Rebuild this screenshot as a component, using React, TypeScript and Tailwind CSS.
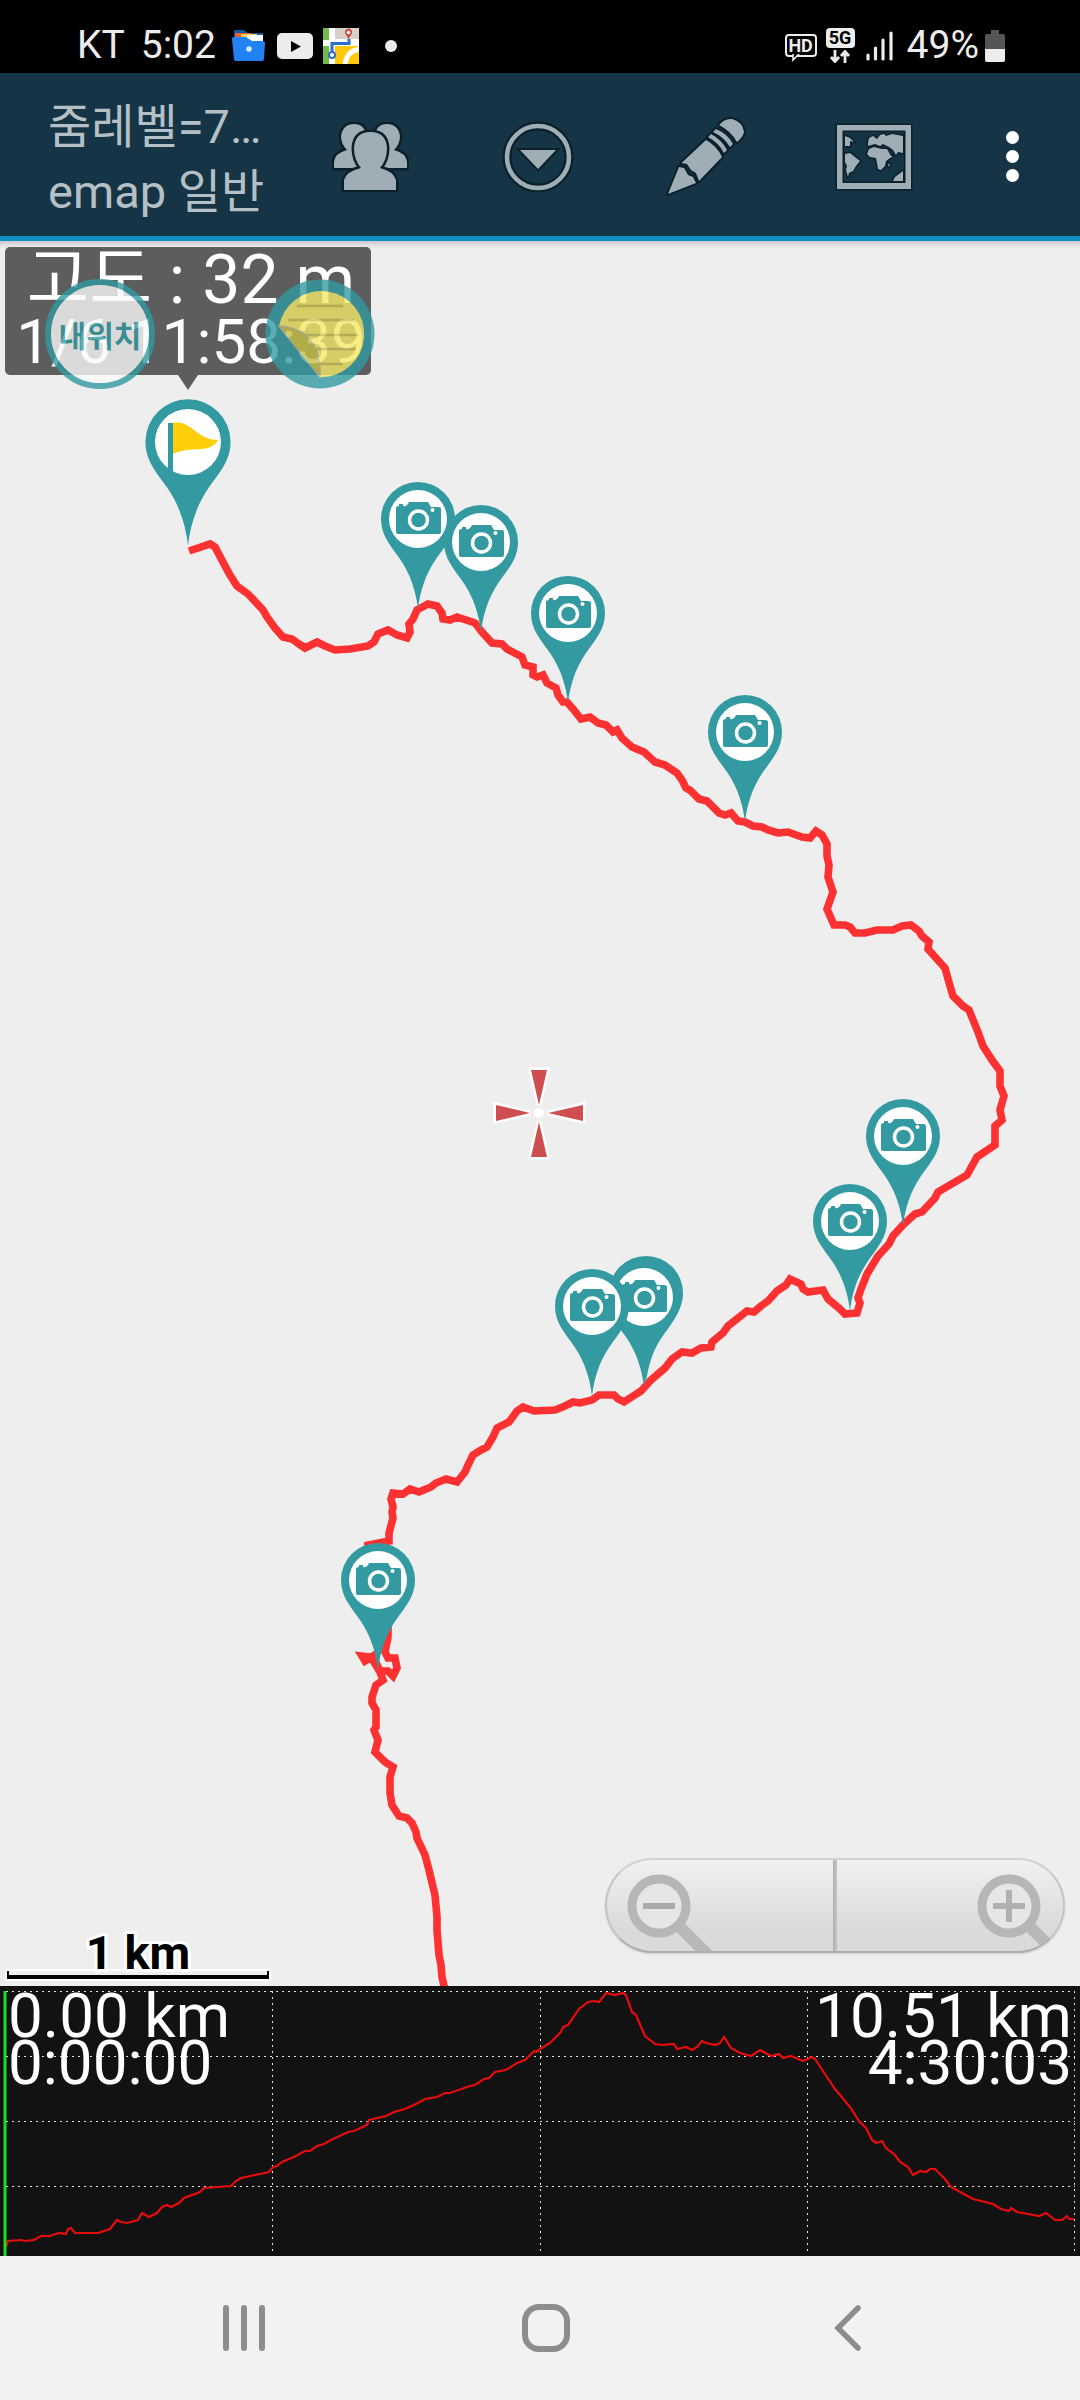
import type { ReactNode } from "react";

type Point = { x: number; y: number };

const TEAL = "#339aa2";

// tip of every photo pin, in map coordinates
const PHOTOS: Point[] = [
  { x: 418, y: 366 },
  { x: 481, y: 389 },
  { x: 568, y: 460 },
  { x: 745, y: 579 },
  { x: 903, y: 983 },
  { x: 850, y: 1068 },
  { x: 646, y: 1140 },
  { x: 644, y: 1144 },
  { x: 592, y: 1153 },
  { x: 378, y: 1427 },
];

const TRACK =
  "189,551 210,544 215,547 224,564 230,575 237,586 248,594 263,610 267,617 275,628 283,637 292,639 299,644 305,648 317,642 325,646 335,650 350,649 368,646 374,642 378,634 388,630 397,635 407,638 410,632 409,624 413,619 417,610 428,604 437,606 442,613 443,619 450,620 457,617 475,623 482,632 492,643 502,644 507,649 522,657 525,665 533,667 533,675 537,677 543,675 547,683 556,688 558,695 563,702 567,702 573,709 581,719 590,717 598,723 606,725 613,732 617,730 622,738 632,747 644,752 655,762 665,765 677,773 682,780 686,788 690,790 699,799 707,801 719,813 725,815 731,813 738,821 745,822 753,826 762,827 768,830 778,833 788,832 802,837 810,838 816,831 822,835 827,844 827,856 829,865 828,877 833,892 827,909 834,925 845,925 850,927 855,933 865,933 877,930 893,930 902,926 911,925 919,931 922,936 929,942 928,949 945,968 950,986 953,996 963,1006 969,1010 978,1032 983,1046 992,1060 1000,1071 1000,1086 1004,1096 1000,1110 1002,1120 995,1126 995,1145 977,1157 967,1175 955,1182 938,1192 935,1198 922,1212 915,1214 903,1225 893,1236 889,1244 878,1256 867,1274 861,1289 858,1298 860,1303 857,1313 845,1314 840,1309 828,1299 823,1290 808,1292 803,1289 801,1284 790,1279 786,1285 777,1291 768,1301 761,1306 754,1312 747,1311 728,1326 723,1333 712,1342 711,1347 701,1348 692,1353 682,1352 672,1359 665,1368 651,1380 641,1391 624,1402 618,1399 614,1395 599,1395 592,1400 580,1403 573,1402 565,1406 555,1410 534,1411 523,1407 517,1411 509,1422 497,1428 493,1437 487,1447 481,1450 473,1455 468,1465 465,1472 457,1482 446,1479 436,1483 431,1487 419,1492 410,1489 403,1494 393,1493 391,1499 393,1507 392,1512 393,1518 389,1533 389,1541 368,1545 370,1580 388,1620 388,1637 385,1652 388,1658 395,1658 397,1668 393,1676 388,1671 380,1671 373,1656 365,1661 362,1656 371,1657 380,1672 383,1680 376,1685 372,1697 372,1703 376,1710 376,1727 374,1730 378,1740 375,1752 385,1762 393,1767 390,1777 390,1793 392,1805 399,1816 407,1818 412,1823 416,1832 417,1838 425,1855 429,1870 435,1895 437,1917 437,1930 439,1955 441,1965 442,1977 445,1990";

const ELEVATION =
  "6,261 8,255 21,254 25,255 34,254 41,250 50,250 59,247 66,248 68,243 71,242 75,247 98,247 110,243 117,234 121,236 127,237 138,234 142,227 149,231 157,227 162,221 167,219 171,221 179,217 184,212 200,206 204,202 231,200 236,195 241,192 255,189 269,186 273,181 277,180 282,176 294,171 305,165 310,165 317,160 324,158 331,154 348,146 354,145 367,139 369,134 386,130 394,126 405,123 418,117 425,113 437,111 445,107 450,107 470,100 475,99 484,93 489,92 495,86 506,84 517,77 525,74 534,65 536,66 540,63 550,57 561,46 563,41 568,39 579,23 588,16 595,15 599,16 606,7 615,9 623,7 626,9 632,26 636,29 645,50 655,58 662,59 674,58 677,63 686,61 692,64 697,61 702,55 706,57 716,59 720,57 724,51 731,62 740,67 751,70 760,64 771,70 779,68 783,72 791,70 803,75 812,71 815,73 827,91 835,103 850,121 859,135 866,142 872,154 876,157 882,155 886,162 895,169 900,176 908,181 913,189 920,185 926,186 930,183 935,183 945,193 951,201 962,207 973,213 993,218 1001,223 1009,225 1011,222 1017,226 1028,228 1039,230 1046,227 1055,234 1062,234 1067,230 1069,233 1074,233";

const PIN = "M0 2C-2-15-7-32-18-48C-27-61-37-71-37-88A37 37 0 0 1 37-88C37-71 27-61 18-48C7-32 2-15 0 2Z";

function PhotoPin({ x, y }: Point) {
  return (
    <g transform={`translate(${x} ${y})`}>
      <path d={PIN} fill={TEAL} />
      <circle cy={-88} r={29} fill="#fff" />
      <g transform="translate(0 -88)">
        <path
          d="M-22-11Q-22-13-19-13V-15H-15V-13Q-11-12-9-17H10L13-12H20Q23-12 23-10V13Q23 15 21 15H-20Q-22 15-22 13Z"
          fill={TEAL}
        />
        <circle cx={0.5} cy={1} r={9} fill={TEAL} stroke="#fff" strokeWidth={3.5} />
        <circle cx={14.5} cy={-9} r={2} fill="#fff" />
      </g>
    </g>
  );
}

function FlagPin({ x, y }: Point) {
  return (
    <g transform={`translate(${x} ${y})`}>
      <path d={PIN} fill={TEAL} transform="scale(1.15)" />
      <circle cy={-101} r={33} fill="#fff" />
      <path d="M-20-120H-15V-69L-20-74Z" fill={TEAL} />
      <path d="M-15-120C2-124 9-103 30-103C22-88 2-98-15-89Z" fill="#ffce0a" />
    </g>
  );
}

function StatusBar() {
  return (
    <header className="flex h-[73px] items-center bg-black pr-[75px] pl-[77px] pt-[18px] text-[39px] leading-none text-[#ececec]">
      <span>KT</span>
      <span className="ml-4">5:02</span>
      <svg className="ml-4 h-8 w-[33px]" viewBox="0 0 33 32">
        <path d="M2 0H12L16 3H31V14H2Z" fill="#12579c" />
        <path d="M3 3H19L23 6V12H3Z" fill="#e8603c" />
        <path d="M9 4H25V12H9Z" fill="#fbc94e" />
        <path d="M15 5H31V12H15Z" fill="#fff" />
        <path d="M0 9Q0 7 2 7H14L20 11H31Q33 11 33 13L32 29Q32 31 30 31H4Q2 31 2 29Z" fill="#2282f3" />
        <circle cx="17" cy="19" r="2.8" fill="#d8e8ff" />
      </svg>
      <svg className="ml-3 h-[26px] w-9" viewBox="0 0 36 26">
        <rect width="36" height="26" rx="5" fill="#ececec" />
        <path d="M14 8L24 13.500L14 19Z" fill="#000" />
      </svg>
      <svg className="ml-[10px] h-9 w-9" viewBox="0 0 36 36">
        <rect width="36" height="36" fill="#fff" />
        <path d="M0 0H6V12H0ZM0 18H6V36H0Z" fill="#73b84a" />
        <path d="M12 0H36V11H12Z" fill="#d6d0c9" />
        <path d="M12 18H36V36H12Z" fill="#ffc80b" />
        <path d="M22 38Q23 22 38 21" fill="none" stroke="#fff" strokeWidth="5" />
        <path d="M9 26V15.500H26V11" fill="none" stroke="#2a6fd0" strokeWidth="3" />
        <circle cx="9" cy="27" r="3" fill="#fff" stroke="#2a6fd0" strokeWidth="2" />
        <path d="M25.500 11L22.500 6A3.500 3.500 0 1 1 28.500 6Z" fill="#d0493f" />
        <circle cx="25.500" cy="4.500" r="1.800" fill="#fff" />
      </svg>
      <span className="ml-[26px] h-3 w-3 rounded-full bg-[#ececec]" />

      <div className="ml-auto flex items-center">
        <span className="relative flex h-[23px] w-8 items-center justify-center rounded-[4px] border-2 border-[#ececec] text-[18px] font-bold">
          HD
          <svg className="absolute -bottom-[7px] left-[5px] h-[8px] w-2" viewBox="0 0 8 8">
            <path d="M1 0V6L7 0" fill="#000" stroke="#ececec" strokeWidth="1.600" />
          </svg>
        </span>
        <div className="ml-[9px] flex flex-col items-center">
          <span className="flex h-[20px] w-[29px] items-center justify-center rounded-[4px] bg-[#ececec] text-[18px] font-bold text-black">
            5G
          </span>
          <svg className="mt-[2px] h-[13px] w-6" viewBox="0 0 24 13">
            <path
              d="M7 0V11M3 7L7 11.500L11 7M17 13V2M13 6L17 1.500L21 6"
              fill="none"
              stroke="#ececec"
              strokeWidth="2.800"
            />
          </svg>
        </div>
        <svg className="ml-[11px] h-[30px] w-7" viewBox="0 0 28 30">
          <path
            d="M2 24V28M9.500 17V28M17 9V28M25 2V28"
            stroke="#ececec"
            strokeWidth="3.200"
            strokeLinecap="round"
          />
        </svg>
        <span className="ml-[13px]">49%</span>
        <svg className="ml-[6px] h-8 w-5" viewBox="0 0 20 32">
          <path d="M6 0H14V4H18Q20 4 20 6V19H0V6Q0 4 2 4H6Z" fill="#555" />
          <path d="M0 19H20V30Q20 32 18 32H2Q0 32 0 30Z" fill="#ececec" />
        </svg>
      </div>
    </header>
  );
}

function ToolButton({ label, children }: { label: string; children: ReactNode }) {
  return (
    <button aria-label={label} className="flex h-full w-[168px] shrink-0 items-center justify-center">
      {children}
    </button>
  );
}

function AppBar() {
  return (
    <div className="flex h-[168px] items-center border-b-[5px] border-[#1291c2] bg-[#153445] pt-1 pr-[14px]">
      <h1 className="min-w-0 flex-1 pt-1 pl-12 text-[47px] leading-[65px] font-normal text-[#b5c0c6]">
        <span className="block truncate">줌레벨=7…</span>
        <span className="block whitespace-nowrap">emap 일반</span>
      </h1>
      <ToolButton label="People">
        <svg
          className="h-[70px] w-[77px]"
          viewBox="0 0 77 70"
          fill="#9fadb4"
          stroke="#0b202b"
          strokeWidth="5"
          strokeLinejoin="round"
          style={{ paintOrder: "stroke" }}
        >
          <path d="M2 46V40Q3 31 15 28Q9 22 9 14Q11 2 22 2Q33 2 34 14V46Z" />
          <path d="M75 46V40Q74 31 62 28Q68 22 68 14Q66 2 55 2Q44 2 43 14V46Z" />
          <path d="M12 68V58Q15 49 29 46Q22 38 22 26Q23 10 38.500 10Q54 10 55 26Q55 38 48 46Q61 49 64 58V68Z" />
        </svg>
      </ToolButton>
      <ToolButton label="More layers">
        <svg className="h-[72px] w-[72px]" viewBox="0 0 72 72">
          <circle cx="36" cy="36" r="31" fill="none" stroke="#0b202b" strokeWidth="9" />
          <circle cx="36" cy="36" r="31" fill="none" stroke="#9fadb4" strokeWidth="4.500" />
          <path
            d="M18 29H54L36 48Z"
            fill="#9fadb4"
            stroke="#0b202b"
            strokeWidth="4"
            style={{ paintOrder: "stroke" }}
          />
        </svg>
      </ToolButton>
      <ToolButton label="Edit">
        <svg
          className="h-[82px] w-20"
          viewBox="0 0 80 82"
          fill="#9fadb4"
          stroke="#0b202b"
          strokeWidth="4"
          strokeLinejoin="round"
          style={{ paintOrder: "stroke" }}
        >
          <path d="M2 78L13 51L18 52L22 59L27 61L30 67Z" />
          <path d="M15.500 47L40 24Q51 30 56 41L33 65L30 57L25 54L21 48Z" />
          <path d="M42 21L45 18Q56 24 61 34L58 37Q53 27 42 21Z" />
          <path d="M47 16L50 13Q62 18 67 28L64 31Q58 21 47 16Z" />
          <path d="M53 9Q59 2 66 3Q77 6 78 16Q77 21 71 26Q65 15 53 9Z" />
        </svg>
      </ToolButton>
      <ToolButton label="World map">
        <svg
          className="h-[70px] w-[78px]"
          viewBox="0 0 78 70"
          fill="#9fadb4"
          stroke="#0b202b"
          strokeWidth="3"
          strokeLinejoin="round"
          style={{ paintOrder: "stroke" }}
        >
          <path d="M2 3H76V67H2ZM7.500 8.500V61H70.500V8.500Z" fillRule="evenodd" />
          <path d="M10 14L15 16L19 20L15 19V24L10 24Z" />
          <path d="M10 32L15 31L25 39L21 44L18 49L14 51L13 55L11 48L12 44L10 40Z" />
          <path d="M33 21L34 16L38 14L42 17L45 13L49 12L51 14L57 12L68 14V31L63 30L61 33L58 28L54 25L48 22L45 24L40 22L33 24Z" />
          <path d="M32 32L34 27L39 25L47 27L52 27L56 34L58 34L51 39L50 44L46 48L43 47L41 36L35 35Z" />
          <path d="M53 43L55 41L54 45Z" />
          <path d="M58 59L60 55L68 49V59Z" />
        </svg>
      </ToolButton>
      <button
        aria-label="More options"
        className="flex h-full w-[108px] shrink-0 flex-col items-center justify-center gap-[6px]"
      >
        <span className="h-[13px] w-[13px] rounded-full bg-white" />
        <span className="h-[13px] w-[13px] rounded-full bg-white" />
        <span className="h-[13px] w-[13px] rounded-full bg-white" />
      </button>
    </div>
  );
}

function ZoomControls() {
  return (
    <div className="absolute right-[15px] bottom-[33px] flex h-[95px] w-[460px] overflow-hidden rounded-full border-2 border-t-[#d2d2d2] border-r-[#c4c4c4] border-b-[#adadad] border-l-[#c4c4c4] bg-linear-to-b from-[#f1f1f1] via-[#dadada] via-75% to-[#dadada] shadow-[0_1px_2px_#ccc]">
      <button aria-label="Zoom out" className="flex-1 border-r-2 border-[#b5b5b5]">
        <svg className="h-[91px] w-[110px]" viewBox="0 0 110 91">
          <path d="M72 66L110 104" stroke="#b8b8b8" strokeWidth="12" />
          <circle cx="52" cy="46" r="27" fill="#e6e6e6" stroke="#b6b6b6" strokeWidth="9" />
          <path d="M36 46H68" stroke="#aaa" strokeWidth="6" />
        </svg>
      </button>
      <button aria-label="Zoom in" className="flex flex-1 justify-end border-l-2 border-[#c0c0c0]">
        <svg className="h-[91px] w-[90px]" viewBox="0 0 90 91">
          <path d="M56 66L90 100" stroke="#b8b8b8" strokeWidth="12" />
          <circle cx="36" cy="46" r="27" fill="#e6e6e6" stroke="#b6b6b6" strokeWidth="9" />
          <path d="M20 46H52M36 30V62" stroke="#b0b0b0" strokeWidth="6" />
        </svg>
      </button>
    </div>
  );
}

function MapView() {
  return (
    <main className="relative min-h-[800px] flex-1 overflow-hidden bg-[#eee] shadow-[inset_0_8px_6px_-6px_#bbb]">
      <svg
        className="absolute inset-0 h-full w-full"
        viewBox="0 0 1080 1745"
        preserveAspectRatio="xMidYMin slice"
      >
        <polyline
          points={TRACK}
          transform="translate(0 -241)"
          fill="none"
          stroke="#fd3131"
          strokeWidth={7.6}
          strokeLinejoin="miter"
        />
        <FlagPin x={188} y={302} />
        {PHOTOS.map((p) => (
          <PhotoPin key={`${p.x}-${p.y}`} {...p} />
        ))}
        <circle cx={539} cy={872} r={5} fill="#fff" />
        <g
          transform="translate(539 872)"
          fill="#cf4f51"
          stroke="#fff"
          strokeWidth={5}
          style={{ paintOrder: "stroke" }}
        >
          <path d="M0-8L-8-43H8Z" />
          <path d="M0 9L-8 44H8Z" />
          <path d="M-9 0L-43-8V8Z" />
          <path d="M9 0L44-8V8Z" />
        </g>
      </svg>

      <div className="absolute top-[6px] left-[5px] flex h-32 w-[366px] flex-col items-center rounded-[5px] bg-[#5d5d5d] pt-[2px] pl-[6px] whitespace-nowrap text-white">
        <span className="text-[68px] leading-[62px]">고도 : 32 m</span>
        <span className="text-[62px] leading-[62px]">1/6 11:58:39</span>
        <svg className="absolute top-full left-[173px] h-[15px] w-5" viewBox="0 0 20 15">
          <path d="M0 0H20L10 15Z" fill="#5d5d5d" />
        </svg>
      </div>

      <button className="absolute top-[38px] left-[45px] flex h-[110px] w-[110px] items-center justify-center rounded-full border-[6px] border-[#339aa2] bg-[#fafafa] pt-1 text-[30px] font-bold whitespace-nowrap text-[#339aa2] opacity-80">
        내위치
      </button>
      <button aria-label="Note" className="absolute top-[38px] left-[265px] opacity-80">
        <svg className="h-[110px] w-[110px]" viewBox="0 0 110 110">
          <circle cx="55" cy="55" r="54.500" fill={TEAL} />
          <path d="M14 47A43 43 0 1 1 55 98Z" fill="#f4e969" />
          <path d="M32 27H78M23 41H89M37 56H93M50 70H91M55 85H78" stroke="#c9bf55" strokeWidth="2.500" />
          <path d="M14 47Q56 50 55 98Z" fill="#c5c043" stroke="#b9b790" strokeWidth="1.500" />
        </svg>
      </button>

      <div className="absolute bottom-[7px] left-[7px] w-[262px]">
        <div className="text-center text-[47px] leading-9 font-bold text-black [-webkit-text-stroke:6px_white] [paint-order:stroke_fill]">
          1 km
        </div>
        <div className="h-2 border-x-2 border-b-4 border-black shadow-[0_0_0_2px_white]" />
      </div>
      <ZoomControls />
    </main>
  );
}

function ElevationChart() {
  return (
    <section className="relative bg-[#121212] text-[62px] leading-[47px] text-white">
      <svg className="block h-[270px] w-full" viewBox="0 0 1080 270" preserveAspectRatio="none">
        <path
          d="M6 5.500H1075M6 70.500H1075M6 135.500H1075M6 200.500H1075M272.500 5V266M540.500 5V266M807.500 5V266M1074.500 5V266"
          stroke="#e4e4e4"
          strokeWidth={1}
          strokeDasharray="2 4"
        />
        <polyline points={ELEVATION} fill="none" stroke="#e80c0c" strokeWidth={2.2} />
        <path d="M5 5V270" stroke="#18e018" strokeWidth={3} />
      </svg>
      <div className="absolute inset-x-0 top-[6px] flex justify-between px-2">
        <div>
          <div>0.00 km</div>
          <div>0:00:00</div>
        </div>
        <div className="text-right">
          <div>10.51 km</div>
          <div>4:30:03</div>
        </div>
      </div>
    </section>
  );
}

function NavBar() {
  return (
    <nav className="flex h-36 items-center justify-center bg-[#f2f2f2] pl-3">
      <button aria-label="Recents" className="flex h-full w-[302px] items-center justify-center">
        <svg className="h-[46px] w-[42px]" viewBox="0 0 42 46">
          <path d="M3 3V43M21 3V43M39 3V43" stroke="#8d8d8d" strokeWidth="6" strokeLinecap="round" />
        </svg>
      </button>
      <button aria-label="Home" className="flex h-full w-[302px] items-center justify-center">
        <svg className="h-12 w-12" viewBox="0 0 48 48">
          <rect x="3" y="3" width="42" height="42" rx="14" fill="none" stroke="#8d8d8d" strokeWidth="6" />
        </svg>
      </button>
      <button aria-label="Back" className="flex h-full w-[302px] items-center justify-center">
        <svg className="h-[46px] w-7" viewBox="0 0 28 46">
          <path d="M24 3L4 23L24 43" fill="none" stroke="#8d8d8d" strokeWidth="5.500" strokeLinecap="round" />
        </svg>
      </button>
    </nav>
  );
}

export default function App() {
  return (
    <div className="flex min-h-screen flex-col bg-black font-['Roboto','Noto_Sans_CJK_KR',sans-serif]">
      <StatusBar />
      <AppBar />
      <MapView />
      <ElevationChart />
      <NavBar />
    </div>
  );
}
